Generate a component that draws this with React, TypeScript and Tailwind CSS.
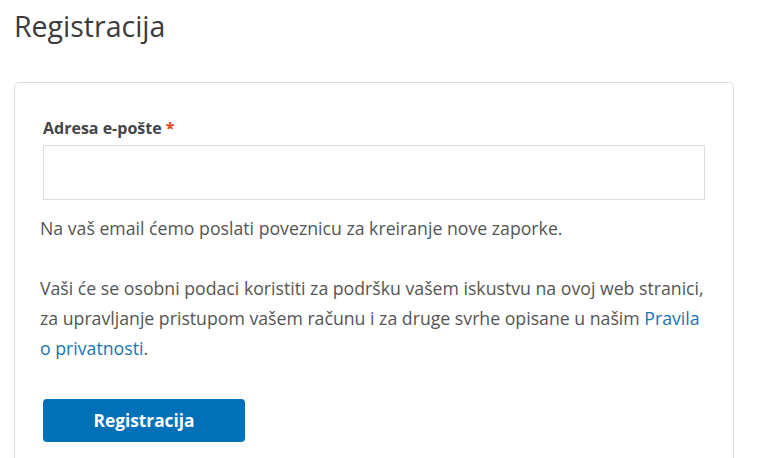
import React from 'react';

const App = () => {
    return (
        <div className="min-h-screen bg-white px-[14px] pt-[6px] font-['Open_Sans',sans-serif] text-[#555]">
            <h1 className="text-[28.5px] leading-[40px] text-[#3b3b3b] font-normal">Registracija</h1>
            <div className="mt-[36px] w-[720px] h-[420px] border border-[#dcdcdc] rounded-[5px] px-[25px] pt-[34px]">
                <form className="flex flex-col">
                    <label className="ml-[3px] text-[16px] leading-[22px] font-bold text-[#43454b]">
                        Adresa e-pošte <span className="text-[#e2401c]">*</span>
                    </label>
                    <input
                        type="email"
                        className="ml-[3px] mt-[6px] w-[662px] h-[55px] border border-[#dddddd] bg-white outline-none"
                    />
                    <p className="mt-[13px] text-[17.7px] leading-[30px]">
                        Na vaš email ćemo poslati poveznicu za kreiranje nove zaporke.
                    </p>
                    <p className="mt-[30px] text-[17.7px] leading-[30px] w-[670px]">
                        Vaši će se osobni podaci koristiti za podršku vašem iskustvu na ovoj web stranici, za upravljanje pristupom vašem računu i za druge svrhe opisane u našim{' '}
                        <a href="#" className="text-[#1a75b0]">Pravila o privatnosti</a>.
                    </p>
                    <button
                        type="button"
                        className="ml-[3px] mt-[36px] w-[202px] h-[43px] rounded-[4px] bg-[#0071b8] text-white text-[17.3px] font-bold"
                    >
                        Registracija
                    </button>
                </form>
            </div>
        </div>
    );
};

export default App;
